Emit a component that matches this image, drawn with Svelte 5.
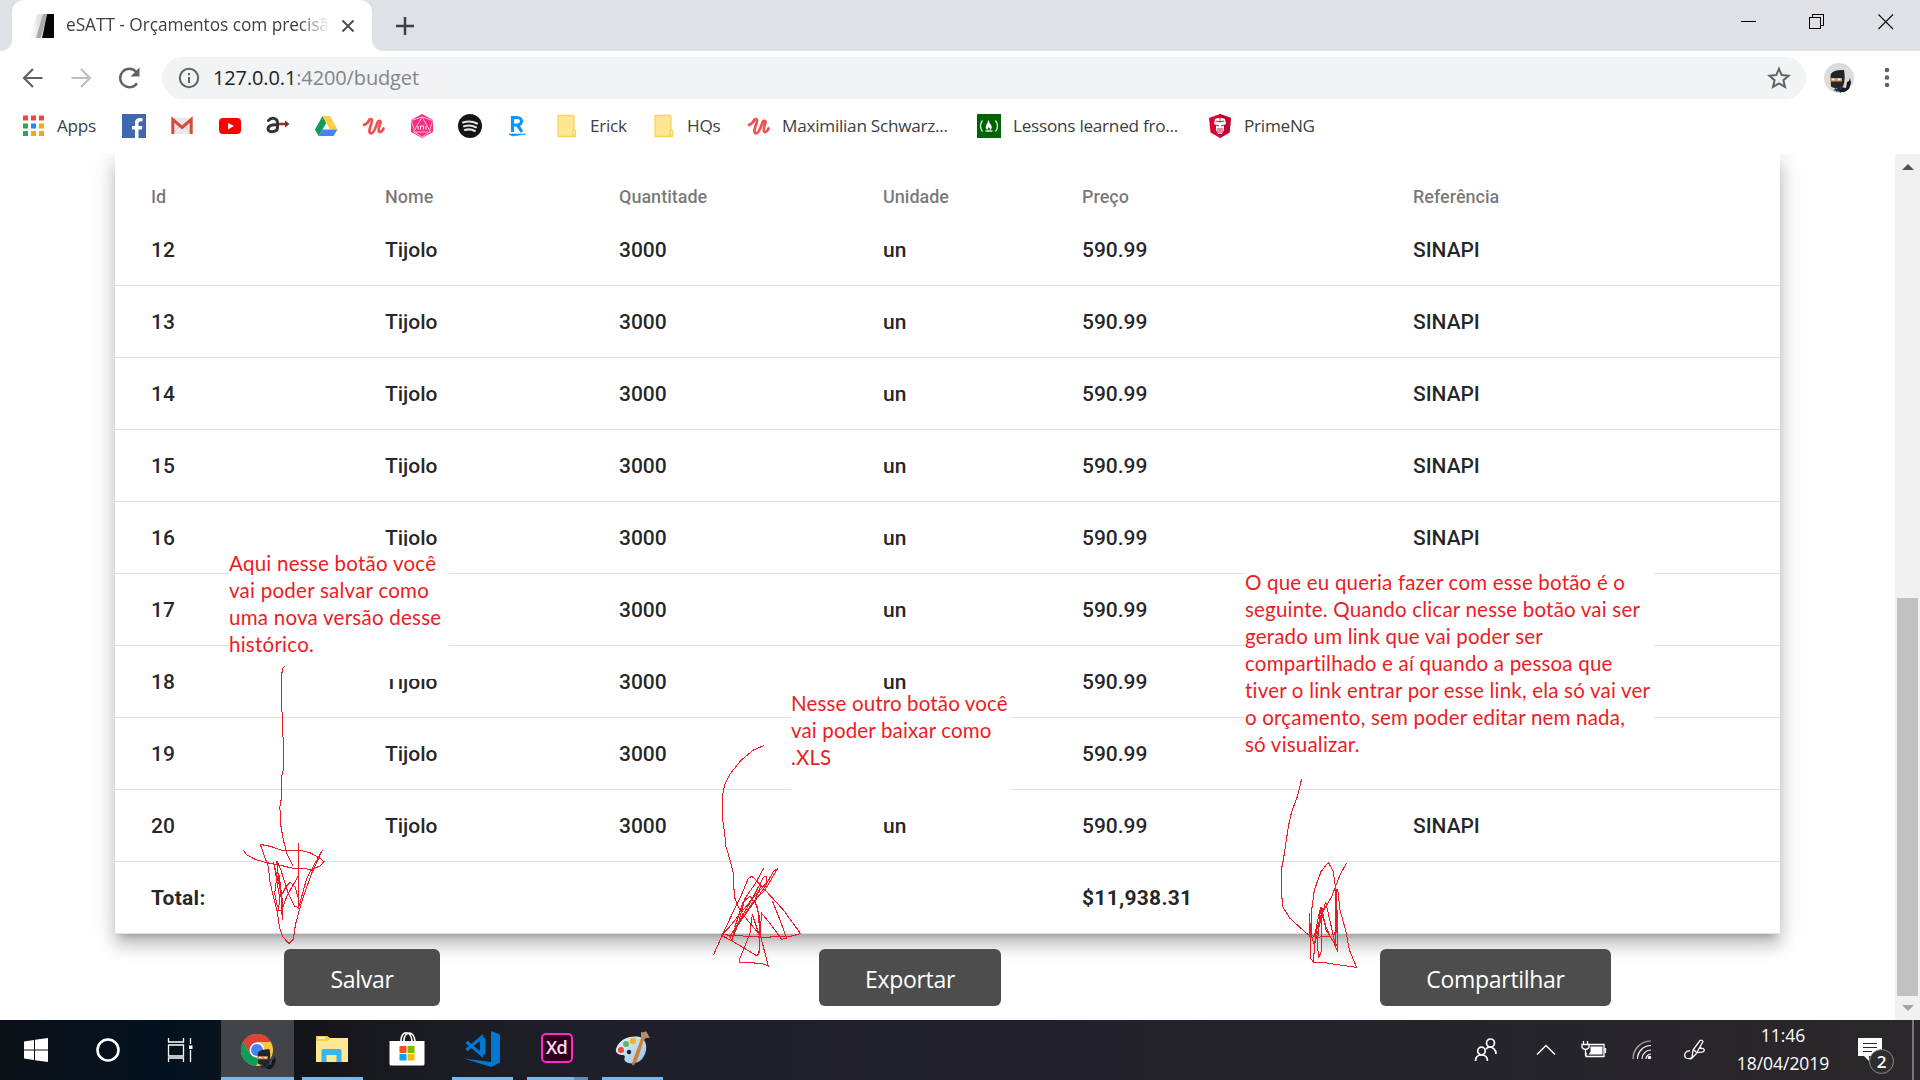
<script>
  const headers = ['Id', 'Nome', 'Quantitade', 'Unidade', 'Preço', 'Referência'];
  // cells that sit completely under a note are left empty
  const covered = { 17: ['nome', 'ref'], 18: ['ref'], 19: ['un', 'ref'] };
  const rows = [12, 13, 14, 15, 16, 17, 18, 19, 20].map((id) => {
    const c = covered[id] ?? [];
    return [id, c.includes('nome') ? '' : 'Tijolo', '3000', c.includes('un') ? '' : 'un', '590.99', c.includes('ref') ? '' : 'SINAPI'];
  });
</script>

{#snippet udemy()}
  <svg class="ic" viewBox="0 0 24 24"><path d="M2 11C5 9.500 7 7 7.500 5.500C10 4 10.500 6 9.500 9C8 13 6 19.500 9 19.500C11.500 19.500 14 13 15.500 8.500C16 6.500 19 6 18.500 8.500C17 13 16 17.500 17.500 18C19 18.500 21 16 21.500 14.500" fill="none" stroke="#ec5252" stroke-width="2.700" stroke-linecap="round" stroke-linejoin="round" /></svg>
{/snippet}

{#snippet folder()}
  <svg class="ic" viewBox="0 0 24 24"><path d="M4 1.500h16v17h1.500V23H4z" fill="#ffe694" /><path d="M4 23V1.500h16M4 22.500h17.500V16.500h-2.500v6M20 1.500v15" fill="none" stroke="#f9d656" stroke-width="1.300" /></svg>
{/snippet}

{#snippet ninja()}
  <path d="M9 27l8-3 5 1 1-6 2-1 1-3 1 5-2 6-4 4z" fill="#17191d" />
  <path d="M6.500 13C7 8 12 7 20 7c1 5 1 12-1 16.500-4 2.500-9 2-12 0z" fill="#22262b" />
  <path d="M10 24l7 6M12 29l7-5" stroke="#2c4669" stroke-width="1" />
  <path d="M6 15h12v3.500H6z" fill="#d6935d" /><path d="M8 16.500h2.500M14 16.500h2.500" stroke="#fff" stroke-width="1.300" />
{/snippet}

<div class="screen">
  <header class="tabs">
    <div class="tab">
      <svg class="ic" viewBox="0 0 24 24"><defs><linearGradient id="fav"><stop offset="0" stop-color="#fff" /><stop offset="1" stop-color="#d5d5d5" /></linearGradient></defs><path d="M7 0h7L8 24H0z" fill="url(#fav)" /><path d="M13 0h4l-6 24H6z" fill="#aaa" /><path d="M17 0h7v24H12z" fill="#050505" /></svg>
      <span class="title">eSATT - Orçamentos com precisã</span>
      <svg class="close" viewBox="0 0 14 14"><path d="M1.500 1.500l11 11m0-11l-11 11" stroke="#4d5156" stroke-width="2" /></svg>
    </div>
    <svg class="plus" viewBox="0 0 18 18"><path d="M9 0v18M0 9h18" stroke="#3c4043" stroke-width="2.500" /></svg>
    <div class="controls">
      <svg viewBox="0 0 16 16" shape-rendering="crispEdges"><path d="M1 7.500h15" stroke="#000" /></svg>
      <svg viewBox="0 0 16 16" shape-rendering="crispEdges"><path d="M.5 3.500h11v11H.5zM3.500 3.500v-3h11v11h-3" fill="none" stroke="#000" /></svg>
      <svg viewBox="0 0 16 16"><path d="M.5 .5l14.500 14.500M15 .5L.5 15" stroke="#111" stroke-width="1.200" /></svg>
    </div>
  </header>

  <div class="toolbar">
    <svg class="nav" viewBox="0 0 24 24"><path d="M21.500 12H3M12 3l-9 9 9 9" fill="none" stroke="#5f6368" stroke-width="2.200" /></svg>
    <svg class="nav" viewBox="0 0 24 24"><path d="M2.500 12H21M12 3l9 9-9 9" fill="none" stroke="#bdbfc1" stroke-width="2.200" /></svg>
    <svg class="nav" viewBox="0 0 24 24"><path d="M20 17.200A9.200 9.200 0 1 1 19.200 5.800" fill="none" stroke="#5f6368" stroke-width="2.400" /><path d="M22.500 1.500v9h-9z" fill="#5f6368" /></svg>
    <div class="omnibox">
      <svg class="info" viewBox="0 0 22 22"><circle cx="11" cy="11" r="9.200" fill="none" stroke="#5f6368" stroke-width="2" /><path d="M11 10v6M11 6v2.200" stroke="#5f6368" stroke-width="2" /></svg>
      <span class="url">127.0.0.1<i>:4200/budget</i></span>
      <svg class="star" viewBox="0 0 24 24"><path d="M12 2.800l2.700 6.300 6.900.6-5.200 4.500 1.600 6.700-6-3.600-6 3.600 1.600-6.700-5.200-4.500 6.900-.6z" fill="none" stroke="#5f6368" stroke-width="2" /></svg>
    </div>
    <svg class="avatar" viewBox="0 0 30 30"><defs><clipPath id="av"><circle cx="15" cy="15" r="15" /></clipPath></defs><circle cx="15" cy="15" r="15" fill="#dcdcdc" /><g clip-path="url(#av)">{@render ninja()}</g></svg>
    <svg class="dots" viewBox="0 0 6 22"><circle cx="3" cy="3" r="2.300" /><circle cx="3" cy="10.500" r="2.300" /><circle cx="3" cy="18" r="2.300" /></svg>
  </div>

  <nav class="bookmarks">
    <span>
      <svg class="ic" viewBox="0 0 24 24"><path d="M2 1.500h5v5H2zM10 1.500h5v5h-5zM18 1.500h5v5h-5z" fill="#f4433c" /><path d="M2 9.500h5v5H2zM2 17h5v5H2z" fill="#34a353" /><path d="M10 9.500h5v5h-5z" fill="#1a8cff" /><path d="M18 9.500h5v5h-5zM10 17h5v5h-5zM18 17h5v5h-5z" fill="#fba900" /></svg><em>Apps</em>
    </span>
    <span><svg class="ic" viewBox="0 0 24 24"><path d="M0 0h24v24H0z" fill="#4267b2" /><path d="M13 24v-8.500h-3V12h3V9c0-3.500 2-5 5-5h2.500v3.500H18.500c-1.500 0-2 .6-2 2V12h3.800l-.5 3.500h-3.300V24z" fill="#fff" /></svg></span>
    <span><svg class="ic" viewBox="0 0 24 24"><path d="M2 4h20v16H2z" fill="#e9e9e9" /><path d="M2 20l8-8M22 20l-8-8" stroke="#ccc" /><path d="M2.800 20V5.500L12 13.500l9.200-8V20" fill="none" stroke="#d54b3d" stroke-width="3" /></svg></span>
    <span><svg class="ic" viewBox="0 0 24 24"><rect x="1" y="4" width="22" height="16" rx="4" fill="#f00" /><path d="M10 9l6 3-6 3.500z" fill="#fff" /></svg></span>
    <span><svg class="ic" viewBox="0 0 24 24"><path d="M11 10h9" stroke="#a32a2f" stroke-width="2.500" /><path d="M19 6.500l4.500 3.500-4.500 3.500z" fill="#8c2429" /><path d="M2.500 6.500C5 3 11.500 3.500 11.500 9v4.500c0 5-9.500 5.500-9.500 1.500 0-4 5-4.500 9-4" fill="none" stroke="#333" stroke-width="3" stroke-linecap="round" /></svg></span>
    <span><svg class="ic" viewBox="0 0 24 24"><path d="M8.500 2L1 15.500 4.500 22l7.800-13z" fill="#0f9d58" /><path d="M8.500 2h7.500l7.500 13.500h-7.500z" fill="#ffcd40" /><path d="M8.200 15.500h15.300L19.500 22h-15z" fill="#4285f4" /></svg></span>
    <span>{@render udemy()}</span>
    <span><svg class="ic" viewBox="0 0 24 24"><path d="M12 0l11 6v12l-11 6L1 18V6z" fill="#f72c82" /><path d="M12 3L3.500 18h17zM1.500 6.500L12 3l10.500 3.500M4 18l8 5 8-5M1.500 7l3 10M22.500 7l-3 10" fill="none" stroke="#ffb7d5" /><path d="M8 15.500v-3.500M10.500 15.500v-3.500h3v3.500M16 15.500v-3.500" stroke="#fff" fill="none" /></svg></span>
    <span><svg class="ic" viewBox="0 0 24 24"><circle cx="12" cy="12" r="12" fill="#171314" /><path d="M5 8.500q7.500-2.500 14 1M6 12.300q6.500-2 12 1M6.800 16q5.500-1.600 10 1" fill="none" stroke="#e4e4e4" stroke-width="2.100" stroke-linecap="round" /></svg></span>
    <span><svg class="ic" viewBox="0 0 24 24"><path d="M5.500 18V3.500h4.500c6 0 6 7.500 0 7.500H6m4.500 0l4.500 7" fill="none" stroke="#0a96ff" stroke-width="3.200" /><path d="M2 20h17q-6 1-14 2z" fill="#0a96ff" stroke="#0a96ff" stroke-width=".6" /></svg></span>
    <span>{@render folder()}<em>Erick</em></span>
    <span>{@render folder()}<em>HQs</em></span>
    <span class="tight">{@render udemy()}<em>Maximilian Schwarz...</em></span>
    <span><svg class="ic" viewBox="0 0 24 24"><path d="M0 0h24v24H0z" fill="#006400" /><path d="M5.500 6.500q-4 5.500 0 11M18.500 6.500q4 5.500 0 11M8.500 17h7" fill="none" stroke="#dfecdf" stroke-width="1.300" /><path d="M12 6.500q0 3 2 4.500 2 3-1 5.300 0-2.300-1.500-3.300-.5 2-1 3-3-2-1-5.500 1.500-2 1.500-4z" fill="#fff" /></svg><em>Lessons learned fro...</em></span>
    <span><svg class="ic" viewBox="0 0 24 24"><path d="M12 0l11 4-1.500 14.500L12 24 2.500 18.500 1 4z" fill="#dd0031" /><path d="M12 0l11 4-1.500 14.500L12 24z" fill="#c3002f" /><path d="M7 5l3-1h4l3 1 1 5-2 1v5l-2 4h-4l-2-4v-5l-2-1z" fill="#fff" /><path d="M12 4v4l-4-1m4 1l4-1M8 11l3 1m5-1l-3 1M10 14v5m2-5v6m2-6v5" stroke="#c3002f" stroke-width=".9" fill="none" /></svg><em>PrimeNG</em></span>
  </nav>

  <main>
    <div class="page">
      <section class="card">
        <div class="row head">{#each headers as h}<span>{h}</span>{/each}</div>
        {#each rows as cells}
          <div class="row">{#each cells as cell}<span>{cell}</span>{/each}</div>
        {/each}
        <div class="row total"><span>Total:</span><span></span><span></span><span></span><span>$11,938.31</span><span></span></div>
      </section>
      <div class="actions"><button class="save">Salvar</button><button class="export">Exportar</button><button class="share">Compartilhar</button></div>
    </div>
    <div class="scroll">
      <svg viewBox="0 0 12 6"><path d="M0 6l6-6 6 6z" fill="#505050" /></svg>
      <div class="thumb"></div>
      <svg viewBox="0 0 12 6"><path d="M0 0l6 6 6-6z" fill="#a3a3a3" /></svg>
    </div>
  </main>

  <footer>
    <div class="sys"><svg width="26" height="26" viewBox="0 0 26 26"><path d="M1 4.500l10-1.500v9.500H1zM12 2.800L25 1v11.500H12zM1 13.500h10V23L1 21.500zM12 13.500h13V25l-13-1.800z" fill="#fff" /></svg></div>
    <div class="sys"><svg width="26" height="26" viewBox="0 0 26 26"><circle cx="13" cy="13" r="10.500" fill="none" stroke="#fff" stroke-width="2.600" /></svg></div>
    <div class="sys"><svg width="26" height="26" viewBox="0 0 26 26"><path d="M1.500 1v4h15V1M1.500 8h15v11h-15zM1.500 25v-4h15v4M23.500 1v6M23.500 13v12" fill="none" stroke="#fff" stroke-width="1.300" /><path d="M22 8.500h3.500V12H22z" fill="#fff" /></svg></div>
    <div class="app chrome">
      <svg width="38" height="40" viewBox="0 0 38 40"><circle cx="18" cy="18" r="16" fill="#f8c53b" /><path d="M4 10a16 16 0 0 1 28 0H18L11 22z" fill="#db4437" /><path d="M4 10a16 16 0 0 0 13 24l7-12H11z" fill="#0f9d58" /><circle cx="18" cy="18" r="7.500" fill="#fff" /><circle cx="18" cy="18" r="6" fill="#4285f4" /><g transform="translate(13 11) scale(.88)">{@render ninja()}</g></svg>
      <b></b>
    </div>
    <div class="app"><svg width="34" height="30" viewBox="0 0 34 30"><path d="M1 2h11l3 2h18v24H1z" fill="#ffe794" /><path d="M1 2h11l3 3-2 2H1z" fill="#f9ce38" /><path d="M3 4h7" stroke="#fff" stroke-width="1.500" /><path d="M6.500 28V17q0-2 2-2h16q2 0 2 2v11h-5v-7h-10v7z" fill="#3cb4e7" /></svg><b></b></div>
    <div class="app"><svg width="36" height="36" viewBox="0 0 36 36"><path d="M12 10C12-1 22-1 23 10M15 10C15 0 25-1 26 10" fill="none" stroke="#fff" stroke-width="1.700" /><path d="M.5 10h35v23q0 1.500-1.500 1.500H2q-1.500 0-1.500-1.500z" fill="#fff" /><path d="M10.500 15h7v7h-7z" fill="#f25022" /><path d="M18.500 15h7v7h-7z" fill="#7fba00" /><path d="M10.500 23h7v6.500h-7z" fill="#00a4ef" /><path d="M18.500 23h7v6.500h-7z" fill="#ffb900" /></svg></div>
    <div class="app"><svg width="36" height="36" viewBox="0 0 36 36"><path d="M27 0l9 3.500v28L27 36 0 27.500l27 3.500z" fill="#0078cf" /><path d="M2.500 11l15 12.500V6.500L2.500 19" fill="none" stroke="#0078cf" stroke-width="3.200" /><path d="M17 5.500l4.500 2v15.500l-4.500 2z" fill="#0078cf" /></svg><b></b></div>
    <div class="app xd"><div class="xdlogo">Xd</div><b></b><u></u></div>
    <div class="app"><svg width="36" height="36" viewBox="0 0 36 36"><defs><linearGradient id="pal" x2="1" y2="1"><stop offset="0" stop-color="#eaf6fd" /><stop offset="1" stop-color="#8fc3e0" /></linearGradient></defs><path d="M2 18C5 8 16 4 26 6c8 3 8 15 2 22-4 5-14 6-17 2-2-3 2-5-2-6-4 0-8-2-7-6z" fill="url(#pal)" /><circle cx="7" cy="19" r="3" fill="#e9493e" /><circle cx="12" cy="13" r="3" fill="#5fb760" /><circle cx="19" cy="10" r="3.200" fill="#f6b21c" /><circle cx="15" cy="21" r="2.200" fill="#1d2333" /><path d="M28 6L21 25l-3 9 2 0 4-8 6-19z" fill="#de7d2c" stroke="#b35d1c" stroke-width=".5" /><path d="M27 1q3 1 5-1l4 7q-4-1-6 2l-3-2z" fill="#b88d63" /></svg><b></b></div>
    <div class="tray">
      <div class="t people"><svg width="24" height="24" viewBox="0 0 24 24"><g fill="none" stroke="#fff" stroke-width="1.700"><circle cx="16.500" cy="5" r="4" /><circle cx="7.500" cy="13" r="3.800" /><path d="M1.500 23q0-6 6-6t6 6M12 11q4-4 8 0 2 1.500 2 5" /></g></svg></div>
      <div class="t chev"><svg width="20" height="12" viewBox="0 0 20 12"><path d="M1 10.500L10 1.500l9 9" fill="none" stroke="#fff" stroke-width="1.400" /></svg></div>
      <div class="t batt"><svg width="26" height="18" viewBox="0 0 26 18"><path d="M8 3.500h15v12H5v-4M24.500 7v5" fill="none" stroke="#fff" stroke-width="1.300" /><path d="M9.500 5.500h12v8H7.500l2-3z" fill="#fff" /><path d="M2.500 0v3M6.500 0v3M1 3.500h7v3q-3.500 4-7 0zM4.500 8v7" fill="none" stroke="#fff" stroke-width="1.300" /></svg></div>
      <div class="t wifi"><svg width="20" height="20" viewBox="0 0 20 20"><g fill="none" stroke="#fff" stroke-width="1.200"><path d="M1 19A18 18 0 0 1 19 1" opacity=".65" /><path d="M5.500 19A13.500 13.500 0 0 1 19 5.500M10 19a9 9 0 0 1 9-9M14 19a5 5 0 0 1 5-5" /></g><circle cx="17.500" cy="17.500" r="1.700" fill="#fff" /></svg></div>
      <div class="t pen"><svg width="22" height="22" viewBox="0 0 22 22"><path d="M8 19L9 11 16 1.500q2-1 3 1L12 15zM10 11l2 2M8 19l-2 1M6 12C2 11-1 16 2 19q5 2 7-2M15 9c4 0 6 1 5 3s-5 1-8 2" fill="none" stroke="#fff" stroke-width="1.300" /></svg></div>
      <div class="clock"><span>11:46</span><span>18/04/2019</span></div>
      <div class="notif"><svg width="26" height="26" viewBox="0 0 26 26"><path d="M1 1h24v18h-13v5l-5-5H1z" fill="#fff" /><path d="M6 6.500h14M6 10.500h14M6 14.500h9" stroke="#29272c" stroke-width="1.200" /></svg><span>2</span></div>
      <div class="desk"></div>
    </div>
  </footer>

  <div class="note n1">Aqui nesse botão você<br />vai poder salvar como<br />uma nova versão desse<br />histórico.</div>
  <div class="note n2">Nesse outro botão você<br />vai poder baixar como<br />.XLS</div>
  <div class="note n3">O que eu queria fazer com esse botão é o<br />seguinte. Quando clicar nesse botão vai ser<br />gerado um link que vai poder ser<br />compartilhado e aí quando a pessoa que<br />tiver o link entrar por esse link, ela só vai ver<br />o orçamento, sem poder editar nem nada,<br />só visualizar.</div>

  <!-- freehand arrows, one group per button -->
  <svg class="ink" viewBox="0 0 1920 1080">
    <g transform="translate(200 530) scale(.33333)">
      <path d="M254 409L248 415L245 435V540L248 560V610L250 630V720L245 740V800L239 835L242 850L243 890L250 930L262 975L278 1007" />
      <path d="M130 961L140 974L165 988L196 997L250 1008L275 1014L335 1018L360 1008L372 995L360 985L330 968L300 961H245L215 950L181 943L190 970L205 1010L210 1055L220 1100L232 1145L238 1190L248 1220L267 1241L280 1228L286 1185L298 1140L310 1100L335 1030L367 961L345 1000L320 1045L305 1100L296 1133L283 1128L265 1090L255 1060L243 1020L230 992L235 1040L243 1100L247 1170V1110L238 1065L221 997L230 1050L240 1110L234 1141L245 1140L262 1095L295 1038M295 940V1137V1105L285 1070L270 1057L258 1070L245 1095L238 1040L228 1060L224 1090L232 1130" />
    </g>
    <g transform="translate(690 670) scale(.33333)">
      <path d="M221 227L190 240L152 272L120 312L104 345L98 375V450L104 490L108 530L120 570L130 610L133 680L142 705L160 735L205 790L213 802" />
      <path d="M70 856L96 797L125 735L150 685L175 625L185 619L195 627L280 720L332 791L305 798L220 802L96 794L115 775L180 695L228 640L230 618L220 622L185 690L120 800L126 812L135 775L190 695L225 660L263 595L250 605L225 650L165 735L122 795M221 595L195 642L165 685L145 760L130 800M96 797L126 813L200 857L207 850L208 770L203 710L180 679L160 695L135 770M213 648L195 690L208 740L212 800L235 888L215 880L150 877L148 870L180 790L187 733L209 800L215 730L240 760L275 808L290 805L270 750L247 692M187 733L192 750L208 795" />
    </g>
    <g transform="translate(1220 550) scale(.33333)">
      <path d="M245 687L232 740L215 785L205 830L190 930L184 960V1020L188 1070L210 1105L262 1152L290 1162L330 1158L318 1130L305 1090" />
      <path d="M379 940L360 975L335 1040L305 1090L290 1140L283 1187L281 1237L272 1225L268 1090L272 1150L283 1185L300 1120L317 1055L345 1180L350 1130V1017L353 1205L340 1175L318 1140L305 1070V1200L296 1225L292 1180L302 1070L283 1160L275 1155V1080L283 1020L303 965L325 937L340 965L347 1017L345 1155M353 1017L360 1080L378 1145L388 1200L410 1252L345 1243L320 1239L281 1237M345 1180L353 1190" />
    </g>
  </svg>
</div>

<style>
  :global(body) { margin: 0; overflow: hidden; }
  .screen { width: 1920px; height: 1080px; display: flex; flex-direction: column; position: relative; background: #fff; overflow: hidden; font-family: "Open Sans", "Noto Sans", sans-serif; color: #3c4043; }
  svg { display: block; flex: none; }
  .ic { width: 24px; height: 24px; }

  .tabs { height: 51px; flex: none; background: #dee1e6; display: flex; align-items: center; padding-left: 12px; }
  .tab { width: 360px; height: 51px; box-sizing: border-box; padding-left: 18px; background: #fff; border-radius: 12px 12px 0 0; display: flex; align-items: center; position: relative; }
  .tab::before, .tab::after { content: ""; position: absolute; bottom: 0; width: 12px; height: 12px; }
  .tab::before { left: -12px; background: radial-gradient(circle at 0 0, transparent 12px, #fff 12.500px); }
  .tab::after { right: -12px; background: radial-gradient(circle at 100% 0, transparent 12px, #fff 12.500px); }
  .title { width: 275px; margin: 0 -13px 2px 12px; white-space: nowrap; font-size: 17.300px; letter-spacing: -.05px; line-height: 26px; -webkit-mask-image: linear-gradient(90deg, #000 232px, transparent 264px); mask-image: linear-gradient(90deg, #000 232px, transparent 264px); }
  .close { width: 14px; height: 14px; margin-left: 13px; }
  .plus { width: 18px; height: 18px; margin-left: 24px; }
  .controls { margin-left: auto; display: flex; gap: 53px; padding: 0 26px 8px 0; }
  .controls svg { width: 16px; height: 16px; }

  .toolbar { height: 54px; flex: none; display: flex; align-items: center; padding-left: 21px; }
  .nav { width: 24px; height: 24px; margin-right: 24px; }
  .omnibox { width: 1644px; height: 42px; margin-left: -3px; border-radius: 21px; background: #f1f3f4; display: flex; align-items: center; box-sizing: border-box; padding: 0 15px 0 16px; }
  .info { width: 22px; height: 22px; }
  .url { flex: 1; margin-left: 13px; font-size: 20px; letter-spacing: -.13px; color: #202124; line-height: 28px; }
  .url i { font-style: normal; color: #80868b; }
  .star { width: 24px; height: 24px; }
  .avatar { width: 30px; height: 30px; margin-left: 18px; }
  .dots { width: 6px; height: 22px; margin-left: 30px; fill: #5f6368; }

  .bookmarks { height: 49px; flex: none; box-sizing: border-box; padding: 0 0 7px 21px; display: grid; align-items: center; grid-template-columns: 100.500px 48px 48.500px 48px 48px 48px 47.500px 48.500px 49px 47px 97px 96px 230px 231px auto; font-size: 17.200px; letter-spacing: -.27px; white-space: nowrap; }
  .bookmarks span { display: flex; align-items: center; gap: 12px; }
  .bookmarks .tight { gap: 11px; }
  .bookmarks em { font-style: normal; padding-bottom: 2px; }

  main { height: 866px; flex: none; display: flex; overflow: hidden; }
  .page { width: 1895px; padding-left: 115px; box-sizing: border-box; }
  .card { width: 1665px; background: #fff; font-family: Roboto, "Liberation Sans", sans-serif; font-weight: 500; font-size: 21px; letter-spacing: -.04px; color: rgba(0, 0, 0, .87); box-shadow: 0 7.500px 7.500px -4.500px rgba(0, 0, 0, .2), 0 12px 15px 1.500px rgba(0, 0, 0, .14), 0 4.500px 21px 3px rgba(0, 0, 0, .12); }
  .row { display: grid; grid-template-columns: 234px 234px 264px 199px 331px auto; align-items: center; height: 72px; box-sizing: border-box; padding-left: 36px; border-bottom: 1px solid #e0e0e0; }
  .head { height: 60px; padding-top: 25px; border: 0; font-size: 18px; letter-spacing: 0; color: rgba(0, 0, 0, .54); }
  .total { font-weight: 700; letter-spacing: .28px; }
  .actions { display: flex; padding: 15px 0 0 169px; }
  button { height: 57px; border: 0; padding: 2px 0 0; border-radius: 6px; background: #4d4d4d; color: #fff; font: 23px "Open Sans", sans-serif; letter-spacing: -.3px; }
  .save { width: 156px; }
  .export { width: 182px; margin-left: 379px; }
  .share { width: 231px; margin-left: 379px; }
  .scroll { width: 25px; box-sizing: border-box; background: #f1f1f1; display: flex; flex-direction: column; align-items: center; padding: 10px 0 9px; }
  .scroll svg { width: 12px; height: 6px; }
  .thumb { width: 21px; height: 398px; margin: auto 0 9px; background: #c1c1c1; }

  footer { height: 60px; flex: none; display: flex; background: linear-gradient(90deg, #0c1118 0, #03111f 170px, #15151a 320px, #1c1c25 450px, #20202b 660px, #24232c 1400px, #2b272a 1920px); }
  .sys { width: 72px; display: flex; align-items: center; justify-content: center; }
  .app { width: 75px; display: flex; align-items: center; justify-content: center; position: relative; padding-bottom: 2px; box-sizing: border-box; }
  .chrome { width: 73px; margin: 0 0 0 5px; background: #424449; padding-top: 5px; }
  .app b, .app u { position: absolute; left: 8px; bottom: 0; width: 61px; height: 3px; background: #76b9ed; }
  .chrome b { left: 0; width: 73px; }
  .xd b { width: 47px; }
  .app u { left: 55px; width: 14px; background: #5b8db8; }
  .xdlogo { width: 32px; height: 30px; box-sizing: border-box; border: 2px solid #ff2bc2; border-radius: 5px; background: #2e001e; color: #ffd9f2; font: 600 18px/25px "Open Sans", sans-serif; text-align: center; letter-spacing: -.8px; margin-bottom: 2px; }
  .tray { margin-left: auto; display: flex; }
  .t { display: flex; align-items: center; justify-content: center; }
  .people { width: 66px; }
  .chev { width: 54px; }
  .batt { width: 42px; }
  .wifi { width: 54px; }
  .pen { width: 52px; }
  .clock { width: 124px; display: flex; flex-direction: column; align-items: center; justify-content: center; color: #fff; font-size: 17.500px; letter-spacing: -.03px; line-height: 28px; padding-bottom: 2px; box-sizing: border-box; }
  .notif { width: 67px; position: relative; display: flex; align-items: center; box-sizing: border-box; padding: 0 0 0 12px; }
  .notif span { position: absolute; left: 24px; top: 29px; width: 23px; height: 23px; border: 1px solid #89888a; border-radius: 50%; background: #2f2d30; color: #fff; font: 600 17px/23px "Open Sans", sans-serif; text-align: center; }
  .desk { width: 8px; box-sizing: border-box; border-left: 2px solid #78777a; }

  .note { position: absolute; background: #fff; color: #ed1c24; font: 20.500px/27px Lato, "Open Sans", sans-serif; letter-spacing: .15px; white-space: nowrap; box-sizing: border-box; }
  .n1 { left: 229px; top: 546px; width: 220px; height: 133px; padding-top: 4px; letter-spacing: .25px; }
  .n2 { left: 791px; top: 690px; width: 220px; height: 119px; }
  .n3 { left: 1245px; top: 569px; width: 409px; height: 206px; letter-spacing: .2px; }
  .ink { position: absolute; left: 0; top: 0; width: 1920px; height: 1080px; pointer-events: none; }
  .ink path { fill: none; stroke: #ed1c24; stroke-width: 3.100; shape-rendering: crispEdges; }
</style>
